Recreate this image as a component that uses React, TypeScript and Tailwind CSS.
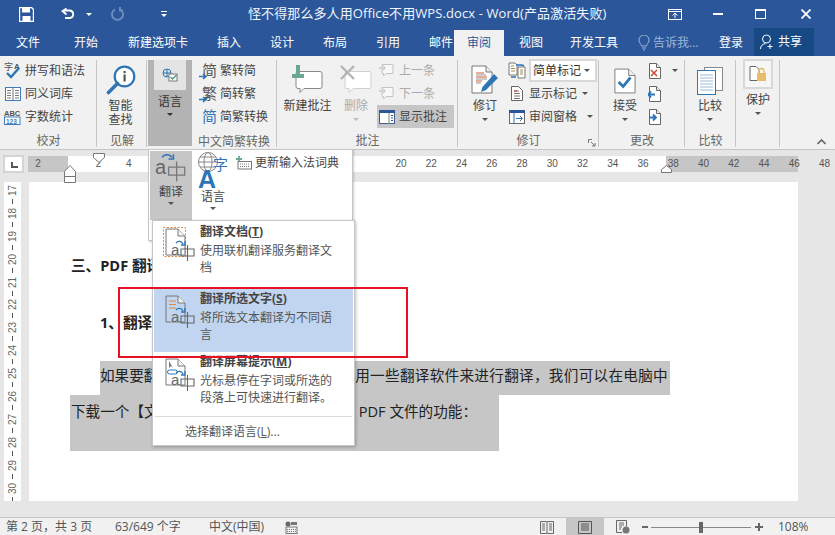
import type { ReactNode } from "react";

const font = { fontFamily: '"Open Sans", "Noto Sans CJK SC", sans-serif' };

const tabs = [
  { label: "文件", w: "w-[56px]" },
  { label: "开始", w: "w-[60px]" },
  { label: "新建选项卡", w: "w-[84px]" },
  { label: "插入", w: "w-[58px]" },
  { label: "设计", w: "w-[48px]" },
  { label: "布局", w: "w-[58px]" },
  { label: "引用", w: "w-[48px]" },
  { label: "邮件", w: "w-[58px]" },
];

function Caret({ className = "border-t-[#555]" }: { className?: string }) {
  return <span className={`inline-block h-0 w-0 border-x-[3px] border-t-[3px] border-x-transparent ${className}`} />;
}

function Group({ label, w, children }: { label: string; w: string; children: ReactNode }) {
  return (
    <div className={`relative flex shrink-0 flex-col ${w}`}>
      <div className="h-[75px]">{children}</div>
      <div className="text-center text-[12px] leading-[16px] text-[#666]">{label}</div>
      <div className="absolute top-[1px] right-0 bottom-[2px] w-px bg-[#c6c6c6]" />
    </div>
  );
}

function Row({ icon, text, dim, className = "" }: { icon: ReactNode; text: string; dim?: boolean; className?: string }) {
  return (
    <div className={`flex h-[23px] items-center gap-[3px] text-[12px] ${dim ? "text-[#aaa]" : "text-[#444]"} ${className}`}>
      <span className="flex w-[19px] shrink-0 justify-center">{icon}</span>
      {text}
    </div>
  );
}

function BigButton({ icon, lines, caret = true, dim, className = "" }: { icon: ReactNode; lines: string[]; caret?: boolean; dim?: boolean; className?: string }) {
  return (
    <div className={`flex flex-col items-center text-[12px] leading-[14px] ${dim ? "text-[#aaa]" : "text-[#444]"} ${className}`}>
      <div className="mb-[4px] flex h-[36px] items-end">{icon}</div>
      {lines.map((line) => (
        <div key={line}>{line}</div>
      ))}
      {caret && (
        <div className="mt-[3px] flex h-[6px] items-center">
          <Caret className={dim ? "border-t-[#bbb]" : "border-t-[#555]"} />
        </div>
      )}
    </div>
  );
}

function SpellIcon() {
  return (
    <svg width="18" height="20" viewBox="0 0 18 20">
      <text x="0" y="9" fontSize="9" fill="#555" fontFamily="Noto Sans CJK SC">字</text>
      <text x="10" y="8" fontSize="8" fontWeight="700" fill="#555" fontFamily="Liberation Sans">A</text>
      <path d="M3 12l4 4 8-9" fill="none" stroke="#2e75b6" strokeWidth="2.4" />
    </svg>
  );
}

function BookIcon() {
  return (
    <svg width="16" height="14" viewBox="0 0 16 14">
      <rect x=".5" y=".5" width="15" height="13" fill="#fff" stroke="#3f7cbf" />
      <path d="M8 1v12M2 3.5h4M2 6h4M2 8.500h4M2 11h4M10 3.500h4M10 6h4M10 8.500h4M10 11h4" stroke="#777" />
    </svg>
  );
}

function CountIcon() {
  return (
    <svg width="17" height="16" viewBox="0 0 17 16">
      <text x="0" y="6.500" fontSize="7.500" fontWeight="700" fill="#555" fontFamily="Liberation Sans">ABC</text>
      <rect x=".5" y="8" width="15.500" height="7.500" fill="#fff" stroke="#3f7cbf" />
      <text x="2" y="14.500" fontSize="6.500" fontWeight="700" fill="#3f7cbf" fontFamily="Liberation Sans">123</text>
    </svg>
  );
}

function SearchIcon() {
  return (
    <svg width="30" height="30" viewBox="0 0 30 30">
      <circle cx="18.500" cy="11.500" r="9.800" fill="#fff" stroke="#2e75b6" strokeWidth="2.200" />
      <path d="M11.500 18.500L2.500 27.500" stroke="#2e75b6" strokeWidth="3.600" strokeLinecap="round" />
      <rect x="17.500" y="9.500" width="2.200" height="7" fill="#555" />
      <rect x="17.500" y="6" width="2.200" height="2.200" fill="#555" />
    </svg>
  );
}

function ConvertIcon({ glyph, arrow = true, color = "#555" }: { glyph: string; arrow?: boolean; color?: string }) {
  return (
    <svg width="18" height="18" viewBox="0 0 18 18">
      <text x="3" y="14" fontSize="15" fill={color} fontFamily="Noto Sans CJK SC">{glyph}</text>
      {arrow && <path d="M0 14.500h6M4 12l3 2.500L4 17" fill="none" stroke="#2e75b6" strokeWidth="1.600" />}
    </svg>
  );
}

function Comment({ w = 28, h = 25, stroke = "#888" }: { w?: number; h?: number; stroke?: string }) {
  return (
    <svg width={w} height={h} viewBox="0 0 28 25">
      <path d="M1 4.500a2 2 0 0 1 2-2h22a2 2 0 0 1 2 2v13a2 2 0 0 1-2 2H9l-4 4v-4H3a2 2 0 0 1-2-2z" fill="#fff" stroke={stroke} />
    </svg>
  );
}

function NewCommentIcon() {
  return (
    <div className="relative h-[30px] w-[32px]">
      <div className="absolute top-[4px] left-[3px]"><Comment /></div>
      <div className="absolute top-[6px] left-0 h-[10px] w-[12px] bg-[linear-gradient(#6aa893,#6aa893)] bg-[length:12px_4px] bg-center bg-no-repeat" />
      <div className="absolute top-0 left-[4px] h-[12px] w-[4px] bg-[#6aa893]" />
    </div>
  );
}

function DeleteCommentIcon() {
  return (
    <div className="relative h-[30px] w-[32px]">
      <div className="absolute top-[4px] left-[4px]"><Comment stroke="#d0d0d0" /></div>
      <svg className="absolute top-0 left-0" width="16" height="16" viewBox="0 0 16 16">
        <path d="M1 1l13 13M14 1L1 14" stroke="#b5b5b5" strokeWidth="2.400" />
      </svg>
    </div>
  );
}

function NavCommentIcon() {
  return (
    <svg width="16" height="15" viewBox="0 0 16 15">
      <path d="M3 1.500h11v9H7l-2.500 2.500v-2.500H3z" fill="#f7f7f7" stroke="#c4c4c4" />
      <path d="M0 5h6M4 2.500l2 2.500-2 2.500" fill="none" stroke="#bdbdbd" />
    </svg>
  );
}

function ShowCommentIcon() {
  return (
    <svg width="16" height="14" viewBox="0 0 16 14">
      <rect x=".5" y=".5" width="15" height="13" fill="#fff" stroke="#44608f" />
      <rect x="0" y="0" width="16" height="3" fill="#2b579a" />
      <path d="M10 3v11" stroke="#888" />
      <path d="M12 5.500h2M12 8h2M12 10.500h2" stroke="#2b579a" />
    </svg>
  );
}

function LinesPage({ children, w = 24, h = 28 }: { children?: ReactNode; w?: number; h?: number }) {
  return (
    <svg width={w} height={h} viewBox="0 0 24 28">
      <path d="M1 1h15l7 7v19H1z" fill="#fff" stroke="#777" />
      <path d="M16 1v7h7" fill="#eee" stroke="#777" />
      {children}
    </svg>
  );
}

function TrackIcon() {
  return (
    <svg width="28" height="30" viewBox="0 0 28 30">
      <path d="M1 1h14l6 6v21H1z" fill="#fff" stroke="#777" />
      <path d="M15 1v6h6" fill="#eee" stroke="#777" />
      <path d="M5 8h8M5 12h11M5 16h6" stroke="#d2593a" />
      <path d="M5 10h10M5 14h11M5 18h5" stroke="#999" />
      <path d="M10 27l1.500-5L23 9l4 4-12 12z" fill="#2e75b6" />
    </svg>
  );
}

function MarkupIcon() {
  return (
    <svg width="18" height="17" viewBox="0 0 18 17">
      <path d="M1 1h6l2 2v10H1z" fill="#fff" stroke="#777" />
      <path d="M10 5h7v11h-7z" fill="#fff" stroke="#777" />
      <path d="M3 4h3M3 6.500h4M3 9h4M12 8h3M12 10h3M12 12h3" stroke="#a85" />
      <path d="M8 3h6l2 1M3 15h5" fill="none" stroke="#2e75b6" strokeWidth="1.500" />
    </svg>
  );
}

function SmallDoc() {
  return (
    <svg width="12" height="15" viewBox="0 0 12 15">
      <path d="M.5.500h7l4 4v10H.5z" fill="#fff" stroke="#666" />
      <path d="M3 5h5M3 7.500h6M3 10h6M3 12.500h6" stroke="#777" />
      <path d="M3 5h3" stroke="#c33" />
    </svg>
  );
}

function PaneIcon() {
  return (
    <svg width="16" height="14" viewBox="0 0 16 14">
      <rect x=".5" y=".5" width="15" height="13" fill="#fff" stroke="#666" />
      <rect width="16" height="3" fill="#2b579a" />
      <path d="M5 3v11M7 8.500h6M11 6l2.500 2.500L11 11" fill="none" stroke="#2e75b6" />
    </svg>
  );
}

function AcceptIcon() {
  return (
    <LinesPage w={22} h={28}>
      <path d="M5 15l5 5 8-10" fill="none" stroke="#2e75b6" strokeWidth="3" />
    </LinesPage>
  );
}

function ChangeIcon({ kind }: { kind: "reject" | "prev" | "next" }) {
  return (
    <svg width="14" height="16" viewBox="0 0 14 16">
      <path d="M1.500.500h7l4 4v11h-11z" fill="#fff" stroke="#666" />
      <path d="M8.500.500v4h4" fill="#eee" stroke="#666" />
      {kind === "reject" && <path d="M3 7l6 6M9 7l-6 6" stroke="#d2492a" strokeWidth="1.500" />}
      {kind === "prev" && <path d="M0 8.500h7M3 5.500l-3 3 3 3" fill="none" stroke="#2e75b6" strokeWidth="1.800" />}
      {kind === "next" && <path d="M1 8.500h7M5 5.500l3 3-3 3" fill="none" stroke="#2e75b6" strokeWidth="1.800" />}
    </svg>
  );
}

function CompareIcon() {
  return (
    <svg width="26" height="28" viewBox="0 0 26 28">
      <rect x="7.500" y=".5" width="18" height="23" fill="#fff" stroke="#888" />
      <rect x=".5" y="3.500" width="18" height="24" fill="#fff" stroke="#2e75b6" />
      <path d="M3 8h13M3 11h13M3 14h13M3 17h13M3 20h13M3 23h13" stroke="#9dbbdc" />
    </svg>
  );
}

function ProtectIcon() {
  return (
    <svg width="18" height="16" viewBox="0 0 18 16">
      <path d="M1 .5h6l3 3v11H1z" fill="#fff" stroke="#666" />
      <rect x="8" y="7" width="9" height="8" fill="#e8bc6a" />
      <path d="M10 7V5a2.500 2.500 0 0 1 5 0v2" fill="none" stroke="#e8bc6a" strokeWidth="1.400" />
    </svg>
  );
}

function TranslateIcon({ size = 42, muted }: { size?: number; muted?: boolean }) {
  return (
    <svg width={size} height={size * 0.9} viewBox="0 0 42 38">
      <text x="1" y="29" fontSize="25" fill="#666" fontFamily="Liberation Sans">a</text>
      <path d="M10 8a7 7 0 0 1 12 0" fill="none" stroke="#2e75b6" strokeWidth="2" />
      <path d="M24 4v6h-6" fill="none" stroke="#2e75b6" strokeWidth="2" />
      <path d="M18 20h20v10H18zM28 13v25" fill="none" stroke={muted ? "#777" : "#666"} strokeWidth="1.600" />
    </svg>
  );
}

function LanguageIcon() {
  return (
    <svg width="34" height="40" viewBox="0 0 34 40">
      <circle cx="12" cy="11" r="9.500" fill="none" stroke="#888" />
      <ellipse cx="12" cy="11" rx="4" ry="9.500" fill="none" stroke="#888" />
      <path d="M2.500 11h19M4 6h16M4 16h16" stroke="#888" />
      <text x="2" y="37" fontSize="25" fontWeight="700" fill="#2e75b6" fontFamily="Liberation Sans">A</text>
      <text x="17" y="19" fontSize="15" fill="#2e75b6" fontFamily="Noto Sans CJK SC">字</text>
    </svg>
  );
}

function KeyboardAddIcon() {
  return (
    <svg width="16" height="14" viewBox="0 0 16 14">
      <path d="M3 0v6M0 3h6" stroke="#6aa893" strokeWidth="1.800" />
      <rect x="2" y="5.500" width="13.500" height="7.500" fill="#fff" stroke="#777" />
      <path d="M4 8h10M4 10.500h10" stroke="#777" strokeDasharray="1 1" />
    </svg>
  );
}

function MenuIcon({ kind }: { kind: "doc" | "text" | "tip" }) {
  return (
    <svg width="32" height="34" viewBox="0 0 32 34">
      {kind === "doc" && <rect x=".5" y=".5" width="22" height="29" fill="none" stroke="#e08a3c" strokeDasharray="2 1.500" />}
      <path d="M3 2h12l7 7v19H3z" fill="none" stroke="#777" />
      <path d="M15 2v7h7" fill="#f4f4f4" stroke="#777" />
      {kind === "text" && <path d="M6 7h7M6 10.500h7M6 14h7" stroke="#e08a3c" />}
      {kind === "tip" && (
        <g>
          <path d="M6 4v7l2-2 2 2z" fill="#777" />
          <rect x="4.500" y="13" width="10" height="4" rx="2" fill="none" stroke="#2e75b6" />
        </g>
      )}
      <text x="8" y="28" fontSize="15" fill="#666" fontFamily="Liberation Sans">a</text>
      <path d="M13 16a4 4 0 0 1 7 1" fill="none" stroke="#2e75b6" strokeWidth="1.300" />
      <path d="M22 14v4h-4" fill="none" stroke="#2e75b6" strokeWidth="1.300" />
      <path d="M18 22h13v7H18zM24.500 18v16" fill="none" stroke="#666" strokeWidth="1.100" />
    </svg>
  );
}

function MenuItem({ kind, title, lines, active, h }: { kind: "doc" | "text" | "tip"; title: ReactNode; lines: string[]; active?: boolean; h: string }) {
  return (
    <div className={`flex pl-[9px] ${h} ${active ? "bg-[#c1d5f0]" : ""}`}>
      <div className="w-[36px] shrink-0 pt-[5px]"><MenuIcon kind={kind} /></div>
      <div className="ml-[1px]">
        <div className="text-[12px] leading-[20px] font-bold text-[#444]">{title}</div>
        {lines.map((line) => (
          <div key={line} className="text-[12px] leading-[17px] text-[#555]">{line}</div>
        ))}
      </div>
    </div>
  );
}

const rulerCells = ["2", "", "2", "4", "", "", "", "", "", "", "", "", "20", "22", "24", "26", "28", "30", "32", "34", "36", "38", "40", "42", "44", "46", "48"];
const sideNumbers = [17, 18, 19, 20, 21, 22, 23, 24, 25, 26, 27, 28, 29, 30];

export default function App() {
  return (
    <div className="relative flex h-[535px] w-[835px] flex-col overflow-hidden bg-[#e6e6e6]" style={font}>
      {/* title bar */}
      <div className="flex h-[28px] shrink-0 items-center bg-[#2b579a] text-white">
        <div className="flex w-[248px] items-center">
          <svg className="ml-[19px]" width="15" height="15" viewBox="0 0 15 15">
            <path d="M.5.500h12l2 2v12H.5z" fill="none" stroke="#fff" strokeWidth="1.400" />
            <rect x="3" y="1" width="8" height="4.500" fill="#fff" />
            <rect x="3.500" y="9" width="8" height="5.500" fill="#fff" />
          </svg>
          <svg className="ml-[27px]" width="15" height="13" viewBox="0 0 15 13">
            <path d="M4 8.500H9a3.800 3.800 0 0 0 0-7.500H3M5.500 5L1.500 1.500 5.500-1" transform="translate(0 1.500)" fill="none" stroke="#fff" strokeWidth="1.800" />
          </svg>
          <span className="ml-[10px] flex"><Caret className="border-t-white" /></span>
          <svg className="ml-[19px]" width="14" height="14" viewBox="0 0 14 14">
            <path d="M4 2.500a5.500 5.500 0 1 0 5 0M9 0v3.500h3" fill="none" stroke="#6f8fbf" strokeWidth="1.800" />
          </svg>
          <span className="ml-[36px] flex flex-col items-center gap-[2px]">
            <span className="h-px w-[6px] bg-white" />
            <Caret className="border-t-white" />
          </span>
        </div>
        <div className="w-[410px] text-[13px] tracking-[0.1px] text-[#f2f5fa]">怪不得那么多人用Office不用WPS.docx - Word(产品激活失败)</div>
        <svg className="ml-[10px]" width="14" height="11" viewBox="0 0 14 11">
          <rect x=".5" y=".5" width="13" height="10" fill="none" stroke="#fff" />
          <path d="M.5 2.500h13M7 9V4.500M4.500 6.500L7 4l2.500 2.500" fill="none" stroke="#fff" />
        </svg>
        <span className="ml-[31px] h-[2px] w-[10px] bg-white" />
        <span className="ml-[32px] h-[10px] w-[11px] border border-t-2 border-white" />
        <svg className="ml-[35px]" width="10" height="10" viewBox="0 0 10 10">
          <path d="M.5.500l9 9M9.500.500l-9 9" stroke="#fff" strokeWidth="1.800" />
        </svg>
      </div>

      {/* tabs */}
      <div className="flex h-[28px] shrink-0 items-end bg-[#2b579a] text-[12px] text-white">
        {tabs.map((tab) => (
          <div key={tab.label} className={`flex h-[26px] items-center justify-center ${tab.w}`}>{tab.label}</div>
        ))}
        <div className="ml-[-16px] flex h-[26px] w-[50px] items-center justify-center bg-[#f1f1f1] text-[#2b579a]">审阅</div>
        <div className="flex h-[26px] w-[54px] items-center justify-center">视图</div>
        <div className="flex h-[26px] w-[72px] items-center justify-center">开发工具</div>
        <div className="flex h-[26px] w-[78px] items-center gap-[3px] pl-[8px] text-[#9db6d8]">
          <svg width="12" height="16" viewBox="0 0 12 16">
            <path d="M3.500 11c0-2-2.500-3-2.500-6a5 5 0 0 1 10 0c0 3-2.500 4-2.500 6zM4 13h4M5 15h2" fill="none" stroke="#9db6d8" />
          </svg>
          告诉我...
        </div>
        <div className="flex h-[26px] w-[46px] items-center justify-center">登录</div>
        <div className="flex h-[28px] w-[60px] items-center gap-[3px] bg-[#174a84] pl-[6px]">
          <svg width="15" height="16" viewBox="0 0 15 16">
            <circle cx="6.500" cy="5" r="4" fill="none" stroke="#fff" />
            <path d="M.5 15c0-3 2-5 5-5.500M10 10v5M7.500 12.500h5" fill="none" stroke="#fff" />
          </svg>
          共享
        </div>
      </div>

      {/* ribbon */}
      <div className="flex h-[94px] shrink-0 border-b border-[#c6c6c6] bg-[#f1f1f1] pt-[3px]">
        <Group label="校对" w="w-[97px]">
          <div className="pl-[3px]">
            <Row icon={<SpellIcon />} text="拼写和语法" />
            <Row icon={<BookIcon />} text="同义词库" />
            <Row icon={<CountIcon />} text="字数统计" />
          </div>
        </Group>
        <Group label="见解" w="w-[50px]">
          <BigButton icon={<SearchIcon />} lines={["智能", "查找"]} caret={false} className="pr-[3px]" />
        </Group>
        <div className="relative flex w-[130px] shrink-0">
          <div className="mt-[1px] ml-[1px] h-[86px] w-[44px] bg-[#b3b3b3] px-[6px]">
            <div className="flex h-[30px] items-center justify-center bg-[#e4e4e4]">
              <svg width="17" height="15" viewBox="0 0 17 15">
                <circle cx="5" cy="5" r="4" fill="none" stroke="#2e75b6" />
                <path d="M1 5h8M5 1v8" stroke="#2e75b6" />
                <rect x="7" y="6" width="8" height="7" fill="#fff" stroke="#777" />
                <path d="M8.500 9l2 2 4-4" fill="none" stroke="#4b9a78" strokeWidth="1.400" />
              </svg>
            </div>
            <div className="mt-[5px] text-center text-[12px] leading-[14px] text-[#333]">语言</div>
            <div className="mt-[4px] flex justify-center"><Caret className="border-t-[#333]" /></div>
          </div>
          <div className="flex-1 pl-[6px]">
            <div className="h-[75px]">
              <Row icon={<ConvertIcon glyph="简" />} text="繁转简" />
              <Row icon={<ConvertIcon glyph="繁" />} text="简转繁" />
              <Row icon={<ConvertIcon glyph="简" arrow={false} color="#2e75b6" />} text="简繁转换" />
            </div>
            <div className="text-[12px] leading-[16px] text-[#666]">中文简繁转换</div>
          </div>
          <div className="absolute top-[1px] right-0 bottom-[2px] w-px bg-[#c6c6c6]" />
        </div>
        <Group label="批注" w="w-[181px]">
          <div className="flex pl-[6px]">
            <BigButton icon={<NewCommentIcon />} lines={["新建批注"]} caret={false} className="w-[49px]" />
            <BigButton icon={<DeleteCommentIcon />} lines={["删除"]} dim className="ml-[8px] w-[32px]" />
            <div className="ml-[5px]">
              <Row icon={<NavCommentIcon />} text="上一条" dim />
              <Row icon={<NavCommentIcon />} text="下一条" dim />
              <Row icon={<ShowCommentIcon />} text="显示批注" className="w-[77px] bg-[#c6c6c6]" />
            </div>
          </div>
        </Group>
        <Group label="修订" w="w-[141px]">
          <div className="flex">
            <BigButton icon={<TrackIcon />} lines={["修订"]} className="w-[46px] pl-[8px]" />
            <div className="ml-[3px]">
              <div className="flex h-[23px] items-center gap-[3px] text-[12px] text-[#444]">
                <span className="flex w-[19px] justify-center"><MarkupIcon /></span>
                <span className="flex h-[23px] w-[68px] items-center justify-between border-2 border-[#d8d8d8] bg-white px-[2px] pr-[5px] text-[#333]">
                  简单标记<Caret />
                </span>
              </div>
              <div className="flex h-[23px] items-center gap-[3px] text-[12px] text-[#444]">
                <span className="flex w-[19px] justify-center"><SmallDoc /></span>
                显示标记<span className="ml-[2px] flex"><Caret /></span>
              </div>
              <div className="flex h-[23px] items-center gap-[3px] text-[12px] text-[#444]">
                <span className="flex w-[19px] justify-center"><PaneIcon /></span>
                审阅窗格<span className="ml-[7px] flex"><Caret /></span>
              </div>
            </div>
          </div>
          <svg className="absolute right-[3px] bottom-[2px]" width="8" height="8" viewBox="0 0 8 8">
            <path d="M.5 4V.5H4M3 3l4 4M7 4v3H4" fill="none" stroke="#777" />
          </svg>
        </Group>
        <Group label="更改" w="w-[86px]">
          <div className="flex">
            <BigButton icon={<AcceptIcon />} lines={["接受"]} className="ml-[13px] w-[26px]" />
            <div className="ml-[10px]">
              <div className="flex h-[23px] items-center gap-[10px]"><ChangeIcon kind="reject" /><Caret /></div>
              <div className="flex h-[23px] items-center"><ChangeIcon kind="prev" /></div>
              <div className="flex h-[23px] items-center"><ChangeIcon kind="next" /></div>
            </div>
          </div>
        </Group>
        <Group label="比较" w="w-[51px]">
          <BigButton icon={<CompareIcon />} lines={["比较"]} className="pr-[1px]" />
        </Group>
        <Group label="" w="w-[44px]">
          <div className="flex flex-col items-center text-[12px] leading-[14px] text-[#444]">
            <div className="flex h-[30px] w-[30px] items-center justify-center border-2 border-[#d8d8d8] bg-[#f6f6f6]"><ProtectIcon /></div>
            <div className="mt-[4px]">保护</div>
            <div className="mt-[3px] flex h-[6px] items-center"><Caret /></div>
          </div>
        </Group>
        <div className="flex flex-1 items-end justify-end pr-[9px] pb-[4px]">
          <svg width="9" height="6" viewBox="0 0 9 6">
            <path d="M.5 5l4-4 4 4" fill="none" stroke="#666" strokeWidth="1.600" />
          </svg>
        </div>
      </div>

      {/* horizontal ruler */}
      <div className="flex h-[30px] shrink-0 items-start pt-[5px]">
        <div className="ml-[3px] flex h-[18px] w-[21px] items-center justify-center border-2 border-[#d4d4d4] bg-white">
          <span className="mt-[2px] ml-[2px] h-[6px] w-[7px] border-b-2 border-l-2 border-[#555]" />
        </div>
        <div className="relative mt-[1px] ml-[4px] h-[16px] w-[770px] bg-[linear-gradient(90deg,#c6c6c6_40px,#fff_40px,#fff_638px,#c6c6c6_638px)]">
          <div className="ml-[-5px] flex text-[10px] leading-[16px] text-[#555]" style={{ fontFamily: '"Liberation Sans", sans-serif' }}>
            {rulerCells.map((n, i) => (
              <span key={i} className="w-[30.25px] shrink-0 text-center">{n}</span>
            ))}
          </div>
          <svg className="absolute top-[-3px] left-[65px]" width="12" height="12" viewBox="0 0 12 12">
            <path d="M.5.500h11v4l-5.500 5-5.500-5z" fill="#fff" stroke="#777" />
          </svg>
          <svg className="absolute top-[9px] left-[36px]" width="12" height="18" viewBox="0 0 12 18">
            <path d="M.5 6.500L6 .5l5.500 6v11H.5zM.5 11.500h11" fill="#fff" stroke="#777" />
          </svg>
          <svg className="absolute top-[9px] left-[633px]" width="11" height="8" viewBox="0 0 11 8">
            <path d="M.5 7.500v-3L5.500.5l5 4v3z" fill="#fff" stroke="#777" />
          </svg>
        </div>
      </div>

      {/* document area */}
      <div className="flex h-[337px] shrink-0 items-start pt-[2px] pb-[17px]">
        <div className="ml-[4px] flex h-[319px] w-[17px] flex-col items-center overflow-hidden bg-white pt-[-1px] text-[10px] text-[#666]" style={{ fontFamily: '"Liberation Sans", sans-serif' }}>
          {sideNumbers.map((n) => (
            <div key={n} className="flex h-[22.900px] shrink-0 flex-col items-center">
              <span className="h-[14px] leading-[14px] [writing-mode:vertical-rl] rotate-180">{n}</span>
              <span className="mt-[3px] h-[5px] w-px bg-[#555]" />
            </div>
          ))}
        </div>
        <div className="ml-[8px] h-[319px] w-[769px] bg-white text-[14.600px] text-[#222]">
          <div className="pt-[72px] pl-[42px] leading-[22px] font-bold">三、PDF 翻译</div>
          <div className="pt-[35px] pl-[71px] leading-[22px] font-bold">1、翻译</div>
          <div className="mt-[28px] ml-[71px] flex h-[34px] w-[570px] items-center justify-between bg-[#c6c6c6] pr-[2px] pb-[5px]">
            <span>如果要翻译 PDF 文件，</span>
            <span className="tracking-[0.3px]">用一些翻译软件来进行翻译，我们可以在电脑中</span>
          </div>
          <div className="ml-[41px] flex h-[56px] w-[429px] items-start justify-between bg-[#c6c6c6] pr-[22px] pt-[6px] pl-[1px]">
            <span>下载一个【文档翻译</span>
            <span>译 PDF 文件的功能：</span>
          </div>
        </div>
      </div>

      {/* status bar */}
      <div className="flex h-[19px] flex-1 items-center border-t border-[#c6c6c6] bg-[#f1f1f1] text-[12px] text-[#555]">
        <span className="ml-[6px] w-[109px]">第 2 页，共 3 页</span>
        <span className="w-[94px]">63/649 个字</span>
        <span className="w-[76px]">中文(中国)</span>
        <svg width="13" height="13" viewBox="0 0 13 13">
          <circle cx="3" cy="3" r="2.500" fill="#666" />
          <rect x="1" y="6" width="11" height="6.500" fill="none" stroke="#777" />
          <path d="M2 8.500h9M2 10.500h9" stroke="#777" strokeDasharray="1 1" />
          <rect x="6" y="1" width="6" height="3" fill="#777" />
        </svg>
        <svg className="ml-[242px]" width="14" height="13" viewBox="0 0 14 13">
          <path d="M.5.500h6l.5 1 .5-1h6v12h-6l-.5-1-.5 1h-6zM7 1.500v10M2 3h3M2 5h3M2 7h3M2 9h3M9 3h3M9 5h3M9 7h3M9 9h3" fill="none" stroke="#666" />
        </svg>
        <span className="ml-[12px] flex h-[18px] w-[38px] items-center justify-center bg-[#c6c6c6]">
          <svg width="14" height="13" viewBox="0 0 14 13">
            <path d="M.5.500h13v12H.5zM3 3h8M3 5h8M3 7h8M3 9h8" fill="none" stroke="#555" />
          </svg>
        </span>
        <svg className="ml-[12px]" width="14" height="14" viewBox="0 0 14 14">
          <path d="M.5.500h10v6M6 12.500H.5V.5M3 3h5M3 5h5M3 7h3M3 9h2" fill="none" stroke="#666" />
          <circle cx="10" cy="10" r="3.500" fill="#777" />
        </svg>
        <span className="ml-[12px] h-[2px] w-[6px] bg-[#666]" />
        <div className="relative ml-[3px] h-px w-[100px] bg-[#888]">
          <span className="absolute top-[-5px] left-[48px] h-[11px] w-[4px] bg-[#666]" />
        </div>
        <svg className="ml-[4px]" width="8" height="8" viewBox="0 0 8 8">
          <path d="M0 4h8M4 0v8" stroke="#666" strokeWidth="2" />
        </svg>
        <span className="ml-[15px]">108%</span>
      </div>

      {/* language dropdown */}
      <div className="absolute top-[149px] left-[148px] flex h-[92px] w-[205px] border border-[#c6c6c6] bg-white p-[1px] shadow-[1px_1px_2px_rgba(0,0,0,0.2)]">
        <div className="flex h-[69px] w-[42px] shrink-0 flex-col items-center bg-[#c6c6c6] text-[12px] leading-[14px] text-[#444]">
          <TranslateIcon size={34} muted />
          <div className="mt-[3px]">翻译</div>
          <div className="mt-[3px] flex"><Caret /></div>
        </div>
        <div className="flex w-[42px] shrink-0 flex-col items-center text-[12px] leading-[14px] text-[#444]">
          <LanguageIcon />
          <div className="mt-[-1px]">语言</div>
          <div className="mt-[3px] flex"><Caret /></div>
        </div>
        <div className="mt-[2px] ml-[2px] flex h-[20px] items-center gap-[3px] text-[12px] text-[#444]">
          <KeyboardAddIcon />
          更新输入法词典
        </div>
      </div>

      {/* translate submenu */}
      <div className="absolute top-[220px] left-[152px] h-[226px] w-[203px] border border-[#c6c6c6] bg-white p-px shadow-[1px_1px_3px_rgba(0,0,0,0.25)]">
        <MenuItem kind="doc" h="h-[67px]" title={<>翻译文档(<u>T</u>)</>} lines={["使用联机翻译服务翻译文", "档"]} />
        <MenuItem kind="text" active h="h-[63px]" title={<>翻译所选文字(<u>S</u>)</>} lines={["将所选文本翻译为不同语", "言"]} />
        <MenuItem kind="tip" h="h-[64px]" title={<>翻译屏幕提示(<u>M</u>)</>} lines={["光标悬停在字词或所选的", "段落上可快速进行翻译。"]} />
        <div className="mx-[1px] h-px bg-[#dcdcdc]" />
        <div className="pt-[6px] pl-[31px] text-[12px] leading-[17px] text-[#555]">选择翻译语言(<u>L</u>)...</div>
      </div>

      {/* red callout */}
      <div className="pointer-events-none absolute top-[287px] left-[118px] h-[71px] w-[290px] border-2 border-[#e81123]" />
    </div>
  );
}
